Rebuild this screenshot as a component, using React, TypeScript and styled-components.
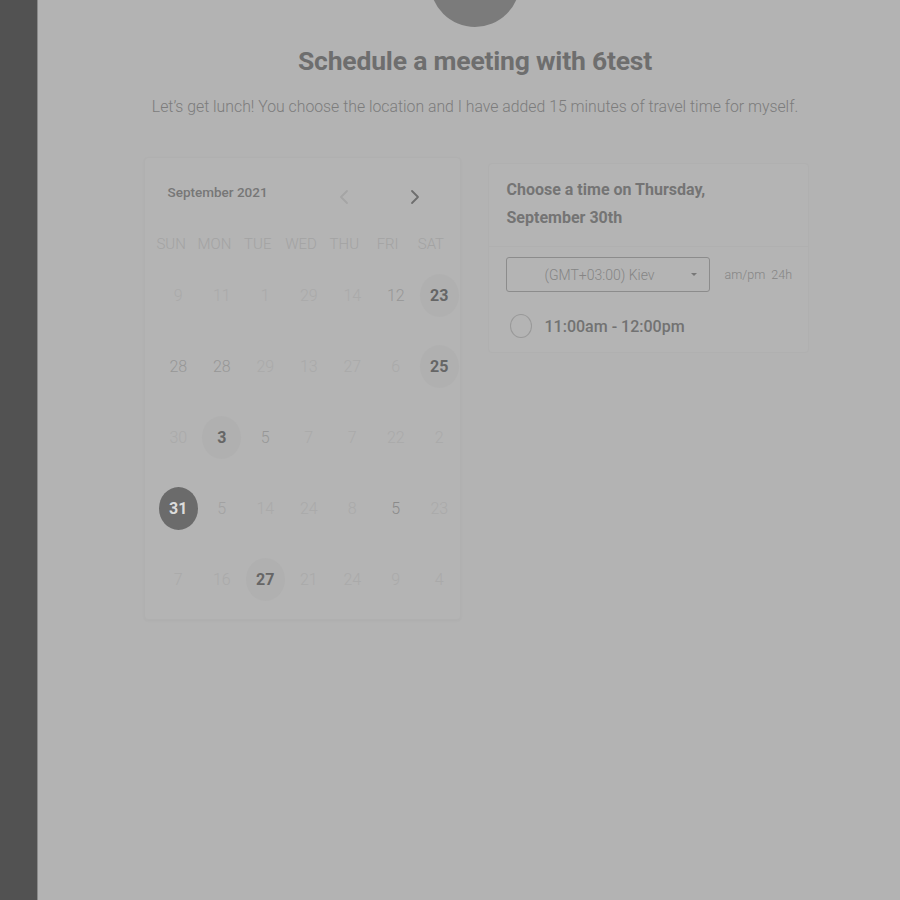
import React from "react";
import styled, { createGlobalStyle } from "styled-components";

const Global = createGlobalStyle`
  html, body { margin: 0; padding: 0; }
  body { font-family: Roboto, "Liberation Sans", sans-serif; background: #b3b3b3; overflow: hidden; }
`;

const Shell = styled.div`
  display: flex;
  width: 900px;
  height: 900px;
  overflow: hidden;
`;

const Sidebar = styled.aside`
  width: 37px;
  flex: none;
  background: #525252;
  border-right: 1px solid #8a8a8a;
`;

const Main = styled.main`
  flex: 1;
  background: #b3b3b3;
  display: flex;
  flex-direction: column;
  align-items: center;
  padding-left: 12px;
`;

const Avatar = styled.div`
  width: 90px;
  height: 90px;
  border-radius: 50%;
  background: #7b7b7b;
  margin-top: -63px;
`;

const Title = styled.h1`
  margin: 18px 0 0;
  font-size: 26.5px;
  line-height: 32px;
  font-weight: 700;
  color: #6e6e6e;
  letter-spacing: -0.2px;
`;

const Subtitle = styled.p`
  margin: 18px 0 0;
  font-size: 15.8px;
  line-height: 24px;
  font-weight: 300;
  color: #7c7c7c;
`;

const Cards = styled.div`
  display: flex;
  align-items: flex-start;
  gap: 27px;
  margin-top: 38px;
  margin-left: 2px;
`;

const CalendarCard = styled.section`
  width: 317px;
  height: 463px;
  box-sizing: border-box;
  border: 1px solid #b0b0b0;
  border-radius: 4px;
  background: #b4b4b4;
  box-shadow: 0 1px 3px rgba(0, 0, 0, 0.03);
`;

const CalHeader = styled.div`
  display: flex;
  align-items: center;
  height: 70px;
  padding: 0 0 0 23px;
`;

const Month = styled.div`
  font-size: 13.5px;
  font-weight: 500;
  color: #777;
  width: 162px;
  margin-top: -2px;
`;

const Arrow = styled.button<{ $dim?: boolean }>`
  all: unset;
  width: 24px;
  height: 24px;
  display: flex;
  align-items: center;
  justify-content: center;
  color: ${(p) => (p.$dim ? "#a5a5a5" : "#6e6e6e")};
  margin-top: 8px;
`;

const PrevArrow = styled(Arrow)`
  margin-left: 2px;
`;

const NextArrow = styled(Arrow)`
  margin-left: 47px;
`;

const WeekRow = styled.div`
  display: grid;
  grid-template-columns: repeat(7, 43.3px);
  padding-left: 5px;
  margin-top: 1px;
  height: 30px;
  align-items: center;
`;

const WeekDay = styled.div`
  text-align: center;
  font-size: 15px;
  font-weight: 300;
  color: #a3a3a3;
`;

const DayGrid = styled.div`
  display: grid;
  grid-template-columns: repeat(7, 43.5px);
  grid-auto-rows: 71px;
  padding-left: 12px;
  margin-top: 1px;
`;

const Day = styled.div<{ $tone: number }>`
  display: flex;
  align-items: center;
  justify-content: center;
  font-size: 16px;
  font-weight: 300;
  color: ${(p) => ["#aaaaaa", "#a2a2a2", "#979797", "#8a8a8a"][p.$tone]};
`;

const Avail = styled.div<{ $selected?: boolean }>`
  width: 39px;
  height: 43px;
  border-radius: 50%;
  display: flex;
  align-items: center;
  justify-content: center;
  font-size: 16px;
  font-weight: 700;
  background: ${(p) => (p.$selected ? "#6b6b6b" : "#b0b0b0")};
  color: ${(p) => (p.$selected ? "#dcdcdc" : "#666")};
`;

const TimeCard = styled.section`
  width: 321px;
  box-sizing: border-box;
  margin-top: 6px;
  border: 1px solid #b0b0b0;
  border-radius: 4px;
  background: #b4b4b4;
`;

const TimeHead = styled.div`
  padding: 12px 18px 14px;
  font-size: 16px;
  font-weight: 700;
  line-height: 28px;
  color: #747474;
`;

const TimeBody = styled.div`
  border-top: 1px solid #b0b0b0;
  padding: 10px 14px 14px 17px;
`;

const ZoneRow = styled.div`
  display: flex;
  align-items: center;
  gap: 15px;
`;

const Select = styled.div`
  flex: none;
  width: 204px;
  height: 35px;
  box-sizing: border-box;
  border: 1px solid #8c8c8c;
  border-radius: 3px;
  display: flex;
  align-items: center;
  padding-left: 38px;
  padding-right: 12px;
  font-size: 14px;
  font-weight: 300;
  color: #858585;
`;

const SelectText = styled.span`
  flex: 1;
`;

const Caret = styled.span`
  width: 0;
  height: 0;
  border-left: 3px solid transparent;
  border-right: 3px solid transparent;
  border-top: 3px solid #777;
`;

const Formats = styled.div`
  white-space: nowrap;
  font-size: 12.5px;
  font-weight: 300;
  color: #858585;
  word-spacing: 3px;
`;

const Slot = styled.div`
  display: flex;
  align-items: center;
  gap: 13px;
  margin-top: 22px;
  padding-left: 4px;
`;

const Radio = styled.span`
  width: 22px;
  height: 24px;
  box-sizing: border-box;
  border-radius: 50%;
  border: 1px solid #999;
`;

const SlotText = styled.span`
  font-size: 16px;
  font-weight: 500;
  color: #727272;
`;

type Cell = { n: number; t?: number; a?: boolean; s?: boolean };

const rows: Cell[][] = [
  [{ n: 9, t: 0 }, { n: 11, t: 0 }, { n: 1, t: 0 }, { n: 29, t: 0 }, { n: 14, t: 0 }, { n: 12, t: 2 }, { n: 23, a: true }],
  [{ n: 28, t: 2 }, { n: 28, t: 2 }, { n: 29, t: 0 }, { n: 13, t: 0 }, { n: 27, t: 0 }, { n: 6, t: 0 }, { n: 25, a: true }],
  [{ n: 30, t: 0 }, { n: 3, a: true }, { n: 5, t: 2 }, { n: 7, t: 0 }, { n: 7, t: 0 }, { n: 22, t: 0 }, { n: 2, t: 0 }],
  [{ n: 31, s: true }, { n: 5, t: 1 }, { n: 14, t: 0 }, { n: 24, t: 0 }, { n: 8, t: 0 }, { n: 5, t: 3 }, { n: 23, t: 0 }],
  [{ n: 7, t: 0 }, { n: 16, t: 0 }, { n: 27, a: true }, { n: 21, t: 0 }, { n: 24, t: 0 }, { n: 9, t: 0 }, { n: 4, t: 0 }],
];

const Chevron = ({ dir }: { dir: "l" | "r" }) => (
  <svg width="10" height="16" viewBox="0 0 10 16" fill="none">
    <path
      d={dir === "l" ? "M8 2 L2 8 L8 14" : "M2 2 L8 8 L2 14"}
      stroke="currentColor"
      strokeWidth="1.8"
      strokeLinecap="round"
      strokeLinejoin="round"
    />
  </svg>
);

export default function App() {
  return (
    <>
      <Global />
      <Shell>
        <Sidebar />
        <Main>
          <Avatar />
          <Title>Schedule a meeting with 6test</Title>
          <Subtitle>
            Let’s get lunch! You choose the location and I have added 15 minutes of travel time for myself.
          </Subtitle>
          <Cards>
            <CalendarCard>
              <CalHeader>
                <Month>September 2021</Month>
                <PrevArrow $dim>
                  <Chevron dir="l" />
                </PrevArrow>
                <NextArrow>
                  <Chevron dir="r" />
                </NextArrow>
              </CalHeader>
              <WeekRow>
                {["SUN", "MON", "TUE", "WED", "THU", "FRI", "SAT"].map((d) => (
                  <WeekDay key={d}>{d}</WeekDay>
                ))}
              </WeekRow>
              <DayGrid>
                {rows.flat().map((c, i) => (
                  <Day key={i} $tone={c.t ?? 0}>
                    {c.a || c.s ? <Avail $selected={c.s}>{c.n}</Avail> : c.n}
                  </Day>
                ))}
              </DayGrid>
            </CalendarCard>
            <TimeCard>
              <TimeHead>
                Choose a time on Thursday,
                <br />
                September 30th
              </TimeHead>
              <TimeBody>
                <ZoneRow>
                  <Select>
                    <SelectText>(GMT+03:00) Kiev</SelectText>
                    <Caret />
                  </Select>
                  <Formats>am/pm 24h</Formats>
                </ZoneRow>
                <Slot>
                  <Radio />
                  <SlotText>11:00am - 12:00pm</SlotText>
                </Slot>
              </TimeBody>
            </TimeCard>
          </Cards>
        </Main>
      </Shell>
    </>
  );
}
